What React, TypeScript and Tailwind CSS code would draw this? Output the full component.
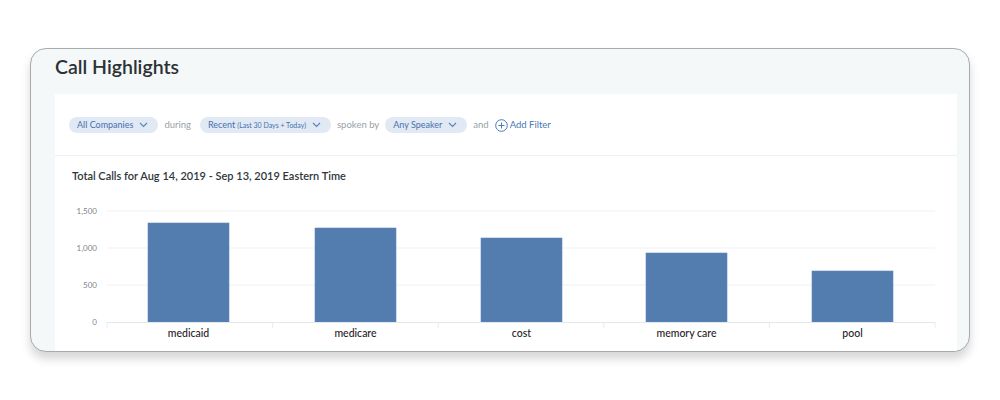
import React from "react";

const bars = [
  { label: "medicaid", x: 93, top: 28 },
  { label: "medicare", x: 260, top: 33 },
  { label: "cost", x: 426, top: 43 },
  { label: "memory care", x: 591, top: 58 },
  { label: "pool", x: 757, top: 76 },
];

const Chevron = () => (
  <svg width="9" height="6" viewBox="0 0 9 6" className="ml-[6px]">
    <path d="M1 1l3.5 3.5L8 1" fill="none" stroke="#5a82bb" strokeWidth="1.1" />
  </svg>
);

const Pill = ({ children }: { children: React.ReactNode }) => (
  <div className="flex items-center h-[16px] rounded-full bg-[#e1e9f4] px-[8px] pr-[10px] text-[9px] text-[#4671ad] whitespace-nowrap">
    {children}
    <Chevron />
  </div>
);

export default function App() {
  return (
    <div className="w-[1000px] h-[400px] bg-white pt-[48px] pl-[30px]" style={{ fontFamily: "Lato, 'Noto Sans', sans-serif" }}>
      <div className="w-[940px] h-[304px] border border-[#a6abae] rounded-[16px] bg-[#f5f8f9] overflow-hidden shadow-[0_7px_10px_rgba(0,0,0,0.16)] flex flex-col">
        <div className="shrink-0 pl-[24px] pt-[6px] h-[45px] text-[19.5px] font-semibold text-[#2c3235] leading-[24px]">
          Call Highlights
        </div>
        <div className="ml-[24px] mr-[12px] flex-1 min-h-0 bg-white flex flex-col">
          <div className="shrink-0 h-[62px] border-b border-[#edf0f3] flex items-center pl-[14px] pt-[1px] text-[9.5px] text-[#9aa1a6]">
            <Pill>All Companies</Pill>
            <span className="ml-[6px] mr-[9px] text-[9.5px]">during</span>
            <Pill>
              Recent<span className="ml-[2px] text-[7px]">(Last 30 Days + Today)</span>
            </Pill>
            <span className="ml-[6px] mr-[6px] text-[9.5px]">spoken by</span>
            <Pill>Any Speaker</Pill>
            <span className="ml-[6px] mr-[6px] text-[9.5px]">and</span>
            <div className="flex items-center text-[#4a78b5] text-[9.5px]">
              <svg width="13" height="13" viewBox="0 0 13 13" className="mr-[2px]">
                <circle cx="6.5" cy="6.5" r="5.8" fill="none" stroke="#4a78b5" strokeWidth="1" />
                <path d="M6.5 3.5v6M3.5 6.5h6" stroke="#4a78b5" strokeWidth="1" />
              </svg>
              Add Filter
            </div>
          </div>
          <div className="shrink-0 pl-[17px] pt-[13px] text-[11px] font-semibold text-[#30363a] leading-[14px]">
            Total Calls for Aug 14, 2019 - Sep 13, 2019 Eastern Time
          </div>
          <svg width="902" height="150" className="mt-[12px] shrink-0" style={{ fontFamily: "Lato, 'Noto Sans', sans-serif" }}>
            {[16, 53, 90].map((y) => (
              <line key={y} x1="52" x2="880" y1={y} y2={y} stroke="#eef1f4" strokeWidth="1" />
            ))}
            {[
              ["1,500", 16],
              ["1,000", 53],
              ["500", 90],
              ["0", 127],
            ].map(([t, y]) => (
              <text key={t as string} x="42" y={(y as number) + 3} textAnchor="end" fontSize="8" fill="#7d8489">
                {t}
              </text>
            ))}
            {bars.map((b) => (
              <rect key={b.label} x={b.x} y={b.top} width="81" height={127 - b.top} fill="#537caf" stroke="#6088bb" strokeWidth="0.6" />
            ))}
            <line x1="52" x2="880" y1="127.5" y2="127.5" stroke="#e3e8ee" strokeWidth="1" />
            {[52, 217.6, 383.2, 548.8, 714.4, 880].map((x) => (
              <line key={x} x1={x} x2={x} y1="127" y2="133" stroke="#e8ecf0" strokeWidth="1" />
            ))}
            {bars.map((b) => (
              <text key={b.label} x={b.x + 40.5} y="142" textAnchor="middle" fontSize="10.5" fontWeight="500" fill="#1f2326">
                {b.label}
              </text>
            ))}
          </svg>
        </div>
      </div>
    </div>
  );
}
